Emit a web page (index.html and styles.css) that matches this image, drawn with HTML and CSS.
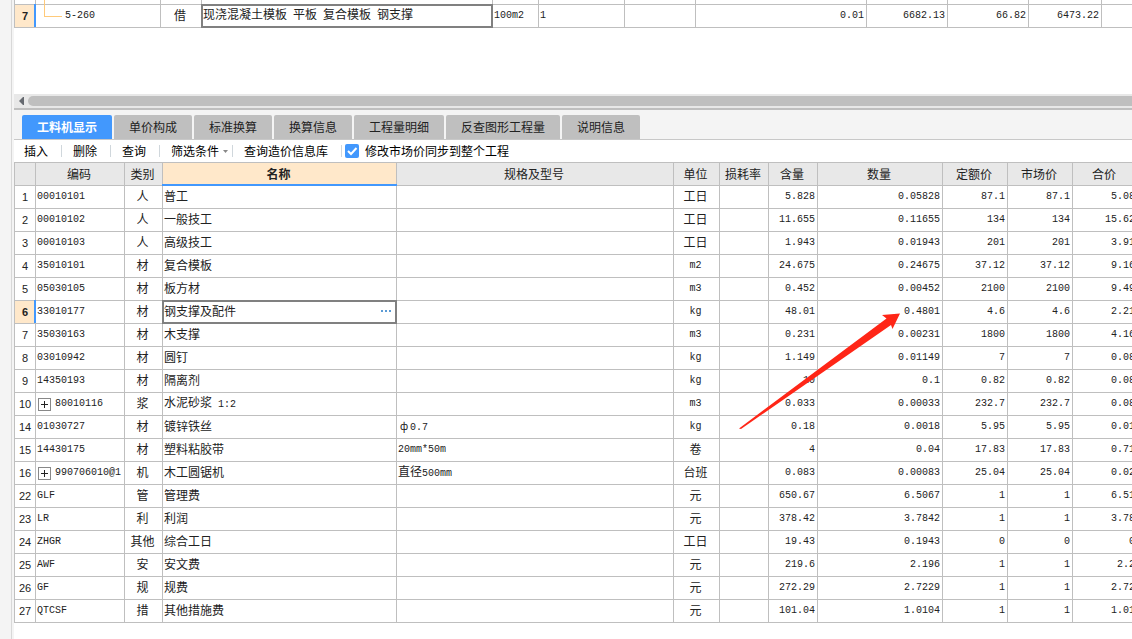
FILE: index.html
```html
<!DOCTYPE html>
<html lang="zh-CN">
<head>
<meta charset="utf-8">
<title>工料机显示</title>
<link rel="stylesheet" href="styles.css">
</head>
<body>
<div class="app">
<aside class="rail"></aside>
<main class="content">
<section class="quota">
<table class="grid quota-grid">
<colgroup><col class="w-first"><col class="w-125"><col class="w-41"><col><col class="w-46"><col class="w-86"><col class="w-71"><col class="w-171"><col class="w-81"><col class="w-81"><col class="w-73"><col class="w-41"></colgroup>
<tbody>
<tr class="sliver"><td></td><td class="tree-stem"></td><td></td><td></td><td></td><td></td><td></td><td></td><td></td><td></td><td></td><td></td></tr>
<tr><th class="no current" scope="row">7</th><td class="tree">5-260</td><td class="mid cjk">借</td><td class="cjk selected">现浇混凝土模板<span class="latin"> </span>平板<span class="latin"> </span>复合模板<span class="latin"> </span>钢支撑</td><td>100m2</td><td>1</td><td></td><td class="num">0.01</td><td class="num">6682.13</td><td class="num">66.82</td><td class="num">6473.22</td><td></td></tr>
</tbody>
</table>
</section>
<div class="scrollbar">
<button class="scroll-left" aria-label="向左滚动"><svg viewBox="0 0 5 8" width="5" height="8"><path d="M5 0V8H4L0 4L4 0Z" fill="#666a70"/></svg></button>
<div class="thumb"></div>
</div>
<nav class="tabs">
<button class="tab active">工料机显示</button><button class="tab">单价构成</button><button class="tab">标准换算</button><button class="tab">换算信息</button><button class="tab">工程量明细</button><button class="tab">反查图形工程量</button><button class="tab">说明信息</button>
</nav>
<div class="toolbar">
<button class="tool">插入</button><button class="tool">删除</button><button class="tool">查询</button><button class="tool drop">筛选条件<svg viewBox="0 0 5 3" width="5" height="3"><path d="M0 0H5L2.5 3Z" fill="#888"/></svg></button><button class="tool">查询造价信息库</button>
<label class="sync"><input type="checkbox" checked>修改市场价同步到整个工程</label>
</div>
<section class="detail">
<table class="grid detail-grid">
<colgroup><col class="w-first"><col class="w-89"><col class="w-38"><col class="w-234"><col><col class="w-46"><col class="w-49"><col class="w-49"><col class="w-125"><col class="w-65"><col class="w-65"><col class="w-65"></colgroup>
<thead><tr><th></th><th>编码</th><th>类别</th><th class="picked">名称</th><th>规格及型号</th><th>单位</th><th>损耗率</th><th>含量</th><th>数量</th><th>定额价</th><th>市场价</th><th>合价</th></tr></thead>
<tbody>
<tr><th class="no" scope="row">1</th><td>00010101</td><td class="mid cjk">人</td><td class="cjk">普工</td><td></td><td class="mid cjk">工日</td><td></td><td class="num">5.828</td><td class="num">0.05828</td><td class="num">87.1</td><td class="num">87.1</td><td class="num">5.08</td></tr>
<tr><th class="no" scope="row">2</th><td>00010102</td><td class="mid cjk">人</td><td class="cjk">一般技工</td><td></td><td class="mid cjk">工日</td><td></td><td class="num">11.655</td><td class="num">0.11655</td><td class="num">134</td><td class="num">134</td><td class="num">15.62</td></tr>
<tr><th class="no" scope="row">3</th><td>00010103</td><td class="mid cjk">人</td><td class="cjk">高级技工</td><td></td><td class="mid cjk">工日</td><td></td><td class="num">1.943</td><td class="num">0.01943</td><td class="num">201</td><td class="num">201</td><td class="num">3.91</td></tr>
<tr><th class="no" scope="row">4</th><td>35010101</td><td class="mid cjk">材</td><td class="cjk">复合模板</td><td></td><td class="mid">m2</td><td></td><td class="num">24.675</td><td class="num">0.24675</td><td class="num">37.12</td><td class="num">37.12</td><td class="num">9.16</td></tr>
<tr><th class="no" scope="row">5</th><td>05030105</td><td class="mid cjk">材</td><td class="cjk">板方材</td><td></td><td class="mid">m3</td><td></td><td class="num">0.452</td><td class="num">0.00452</td><td class="num">2100</td><td class="num">2100</td><td class="num">9.49</td></tr>
<tr><th class="no current" scope="row">6</th><td>33010177</td><td class="mid cjk">材</td><td class="cjk selected"><div class="editor">钢支撑及配件<button class="more" aria-label="更多"><i></i><i></i><i></i></button></div></td><td></td><td class="mid">kg</td><td></td><td class="num">48.01</td><td class="num">0.4801</td><td class="num">4.6</td><td class="num">4.6</td><td class="num">2.21</td></tr>
<tr><th class="no" scope="row">7</th><td>35030163</td><td class="mid cjk">材</td><td class="cjk">木支撑</td><td></td><td class="mid">m3</td><td></td><td class="num">0.231</td><td class="num">0.00231</td><td class="num">1800</td><td class="num">1800</td><td class="num">4.16</td></tr>
<tr><th class="no" scope="row">8</th><td>03010942</td><td class="mid cjk">材</td><td class="cjk">圆钉</td><td></td><td class="mid">kg</td><td></td><td class="num">1.149</td><td class="num">0.01149</td><td class="num">7</td><td class="num">7</td><td class="num">0.08</td></tr>
<tr><th class="no" scope="row">9</th><td>14350193</td><td class="mid cjk">材</td><td class="cjk">隔离剂</td><td></td><td class="mid">kg</td><td></td><td class="num">10</td><td class="num">0.1</td><td class="num">0.82</td><td class="num">0.82</td><td class="num">0.08</td></tr>
<tr><th class="no" scope="row">10</th><td><div class="branch"><button class="expand" aria-label="展开"></button>80010116</div></td><td class="mid cjk">浆</td><td class="cjk">水泥砂浆<span class="latin"> 1:2</span></td><td></td><td class="mid">m3</td><td></td><td class="num">0.033</td><td class="num">0.00033</td><td class="num">232.7</td><td class="num">232.7</td><td class="num">0.08</td></tr>
<tr><th class="no" scope="row">14</th><td>01030727</td><td class="mid cjk">材</td><td class="cjk">镀锌铁丝</td><td class="cjk"><span class="wide">ф</span><span class="latin">0.7</span></td><td class="mid">kg</td><td></td><td class="num">0.18</td><td class="num">0.0018</td><td class="num">5.95</td><td class="num">5.95</td><td class="num">0.01</td></tr>
<tr><th class="no" scope="row">15</th><td>14430175</td><td class="mid cjk">材</td><td class="cjk">塑料粘胶带</td><td>20mm*50m</td><td class="mid cjk">卷</td><td></td><td class="num">4</td><td class="num">0.04</td><td class="num">17.83</td><td class="num">17.83</td><td class="num">0.71</td></tr>
<tr><th class="no" scope="row">16</th><td><div class="branch"><button class="expand" aria-label="展开"></button>990706010@1</div></td><td class="mid cjk">机</td><td class="cjk">木工圆锯机</td><td class="cjk">直径<span class="latin">500mm</span></td><td class="mid cjk">台班</td><td></td><td class="num">0.083</td><td class="num">0.00083</td><td class="num">25.04</td><td class="num">25.04</td><td class="num">0.02</td></tr>
<tr><th class="no" scope="row">22</th><td>GLF</td><td class="mid cjk">管</td><td class="cjk">管理费</td><td></td><td class="mid cjk">元</td><td></td><td class="num">650.67</td><td class="num">6.5067</td><td class="num">1</td><td class="num">1</td><td class="num">6.51</td></tr>
<tr><th class="no" scope="row">23</th><td>LR</td><td class="mid cjk">利</td><td class="cjk">利润</td><td></td><td class="mid cjk">元</td><td></td><td class="num">378.42</td><td class="num">3.7842</td><td class="num">1</td><td class="num">1</td><td class="num">3.78</td></tr>
<tr><th class="no" scope="row">24</th><td>ZHGR</td><td class="mid cjk">其他</td><td class="cjk">综合工日</td><td></td><td class="mid cjk">工日</td><td></td><td class="num">19.43</td><td class="num">0.1943</td><td class="num">0</td><td class="num">0</td><td class="num">0</td></tr>
<tr><th class="no" scope="row">25</th><td>AWF</td><td class="mid cjk">安</td><td class="cjk">安文费</td><td></td><td class="mid cjk">元</td><td></td><td class="num">219.6</td><td class="num">2.196</td><td class="num">1</td><td class="num">1</td><td class="num">2.2</td></tr>
<tr><th class="no" scope="row">26</th><td>GF</td><td class="mid cjk">规</td><td class="cjk">规费</td><td></td><td class="mid cjk">元</td><td></td><td class="num">272.29</td><td class="num">2.7229</td><td class="num">1</td><td class="num">1</td><td class="num">2.72</td></tr>
<tr><th class="no" scope="row">27</th><td>QTCSF</td><td class="mid cjk">措</td><td class="cjk">其他措施费</td><td></td><td class="mid cjk">元</td><td></td><td class="num">101.04</td><td class="num">1.0104</td><td class="num">1</td><td class="num">1</td><td class="num">1.01</td></tr>
</tbody>
</table>
<svg class="pointer" viewBox="0 0 162 116" width="162" height="116"><path d="M0 115.5L147.5 5.5L143 2L161 .5L153.5 16L152 12L2 116Z" fill="#ff2617"/></svg>
</section>
</main>
</div>
</body>
</html>
```

FILE: styles.css
```css
* { box-sizing: border-box; }
body {
  margin: 0;
  background: #fff;
  color: #222;
  font: 12px/16px "Noto Sans CJK SC", sans-serif;
}
button { margin: 0; padding: 0; border: 0; background: none; color: inherit; font: inherit; }
.app { display: flex; min-height: 100vh; overflow: hidden; }
.rail { flex: none; width: 14px; background: linear-gradient(90deg, #f4f4f4 11px, #d8d8d8 11px, #d8d8d8 12px, #f4f4f4 12px); }
.content { flex: 1; min-width: 0; }

.grid {
  table-layout: fixed;
  border-spacing: 0;
  border-left: 1px solid #bfbfbf;
}
.grid td, .grid th {
  height: 23px;
  padding: 0 2px 0 1px;
  border-right: 1px solid #bfbfbf;
  border-bottom: 1px solid #bfbfbf;
  font: 10px/16px "Liberation Mono", monospace;
  text-align: left;
  white-space: nowrap;
}
.grid thead th { height: 24px; padding: 0 2px 0 0; border-top: 1px solid #bfbfbf; background: #e8e8e8; }
.grid .cjk, .grid thead th { font: 12px/16px "Noto Sans CJK SC", sans-serif; }
.grid .cjk { padding: 0 1px 2px; }
.grid .mid, .grid thead th { text-align: center; }
.grid .mid { padding-left: 0; padding-right: 2px; }
.grid .num { text-align: right; }
.grid .no { padding: 0; font: 11px/16px "Liberation Sans", sans-serif; text-align: center; }
.grid .current { position: relative; background: #ffe8ca; font-weight: bold; }
.current::after { content: ""; position: absolute; top: -1px; right: -1px; bottom: 0; width: 2px; background: #4298fd; }
.grid thead .picked { position: relative; background: #ffe8ca; font-weight: bold; }
.picked::after { content: ""; position: absolute; left: -1px; right: -1px; bottom: -1px; height: 2px; background: #4298fd; }
.selected { position: relative; }
.selected::after { content: ""; position: absolute; inset: -1px; border: 2px solid #808080; pointer-events: none; }
.latin { font: 10px/16px "Liberation Mono", monospace; }
.wide { display: inline-block; width: 12px; font-size: 10px; line-height: 16px; text-align: center; }

.w-first { width: 21px; }
.w-38 { width: 38px; }
.w-41 { width: 41px; }
.w-46 { width: 46px; }
.w-49 { width: 49px; }
.w-65 { width: 65px; }
.w-71 { width: 71px; }
.w-73 { width: 73px; }
.w-81 { width: 81px; }
.w-86 { width: 86px; }
.w-89 { width: 89px; }
.w-125 { width: 125px; }
.w-171 { width: 171px; }
.w-234 { width: 234px; }

.quota { height: 94px; overflow: hidden; }
.quota-grid { width: calc(100% + 11px); }
.grid .sliver td { height: 5px; line-height: 0; }
.tree-stem, .tree { position: relative; }
.grid .tree { padding-left: 29px; }
.tree-stem::after { content: ""; position: absolute; top: 0; bottom: -1px; left: 8px; border-left: 1px solid #ffca7a; }
.tree::before { content: ""; position: absolute; top: 0; left: 8px; width: 17px; height: 11px; border: solid #ffca7a; border-width: 0 0 1px 1px; }

.scrollbar { display: flex; height: 16px; padding: 2px 0; background: #e8e8e8; border-bottom: 2px solid #bfbfbf; }
.scroll-left { display: flex; flex: none; align-items: center; justify-content: center; width: 14px; }
.thumb { flex: 1; height: 10px; border-radius: 5px 0 0 5px; background: #bfbfbf; }

.tabs { display: flex; gap: 2px; height: 30px; padding: 5px 8px 0; background: #f4f4f4; border-bottom: 1px solid #c8c8c8; }
.tab { padding: 0 15px; border-radius: 2px 2px 0 0; background: #bfbfbf; }
.tab.active { background: #4298fd; color: #fff; font-weight: bold; }

.toolbar { display: flex; align-items: center; height: 22px; padding-left: 10px; color: #000; }
.tool { display: flex; align-items: center; margin-right: 11px; }
.tool::after { content: ""; height: 12px; margin-left: 13px; border-left: 1px solid #d0d7dc; }
.tool svg { margin-left: 4px; }
.drop::after { margin-left: 4px; }
.tool:nth-of-type(5) { margin-right: 3px; }
.sync { display: flex; align-items: center; gap: 6px; }
.sync input {
  appearance: none;
  width: 14px;
  height: 14px;
  margin: 0;
  border-radius: 2px;
  background: #4298fd url("data:image/svg+xml,%3Csvg xmlns='http://www.w3.org/2000/svg' viewBox='0 0 14 14'%3E%3Cpath d='M3 7L6 10L11.5 4' fill='none' stroke='white' stroke-width='2'/%3E%3C/svg%3E");
}

.detail { position: relative; }
.detail-grid { width: calc(100% + 6px); }
.editor, .branch { display: flex; align-items: center; }
.editor { justify-content: space-between; padding-right: 4px; }
.more { display: flex; gap: 2px; }
.more i { width: 2px; height: 2px; background: #5b9bd5; }
.branch { gap: 4px; padding-left: 1px; }
.expand {
  flex: none;
  width: 13px;
  height: 13px;
  border: 1px solid #888;
  background: linear-gradient(#222, #222) center / 7px 1px no-repeat, linear-gradient(#222, #222) center / 1px 7px no-repeat;
}
.pointer { position: absolute; top: 151px; right: 231px; }
```
